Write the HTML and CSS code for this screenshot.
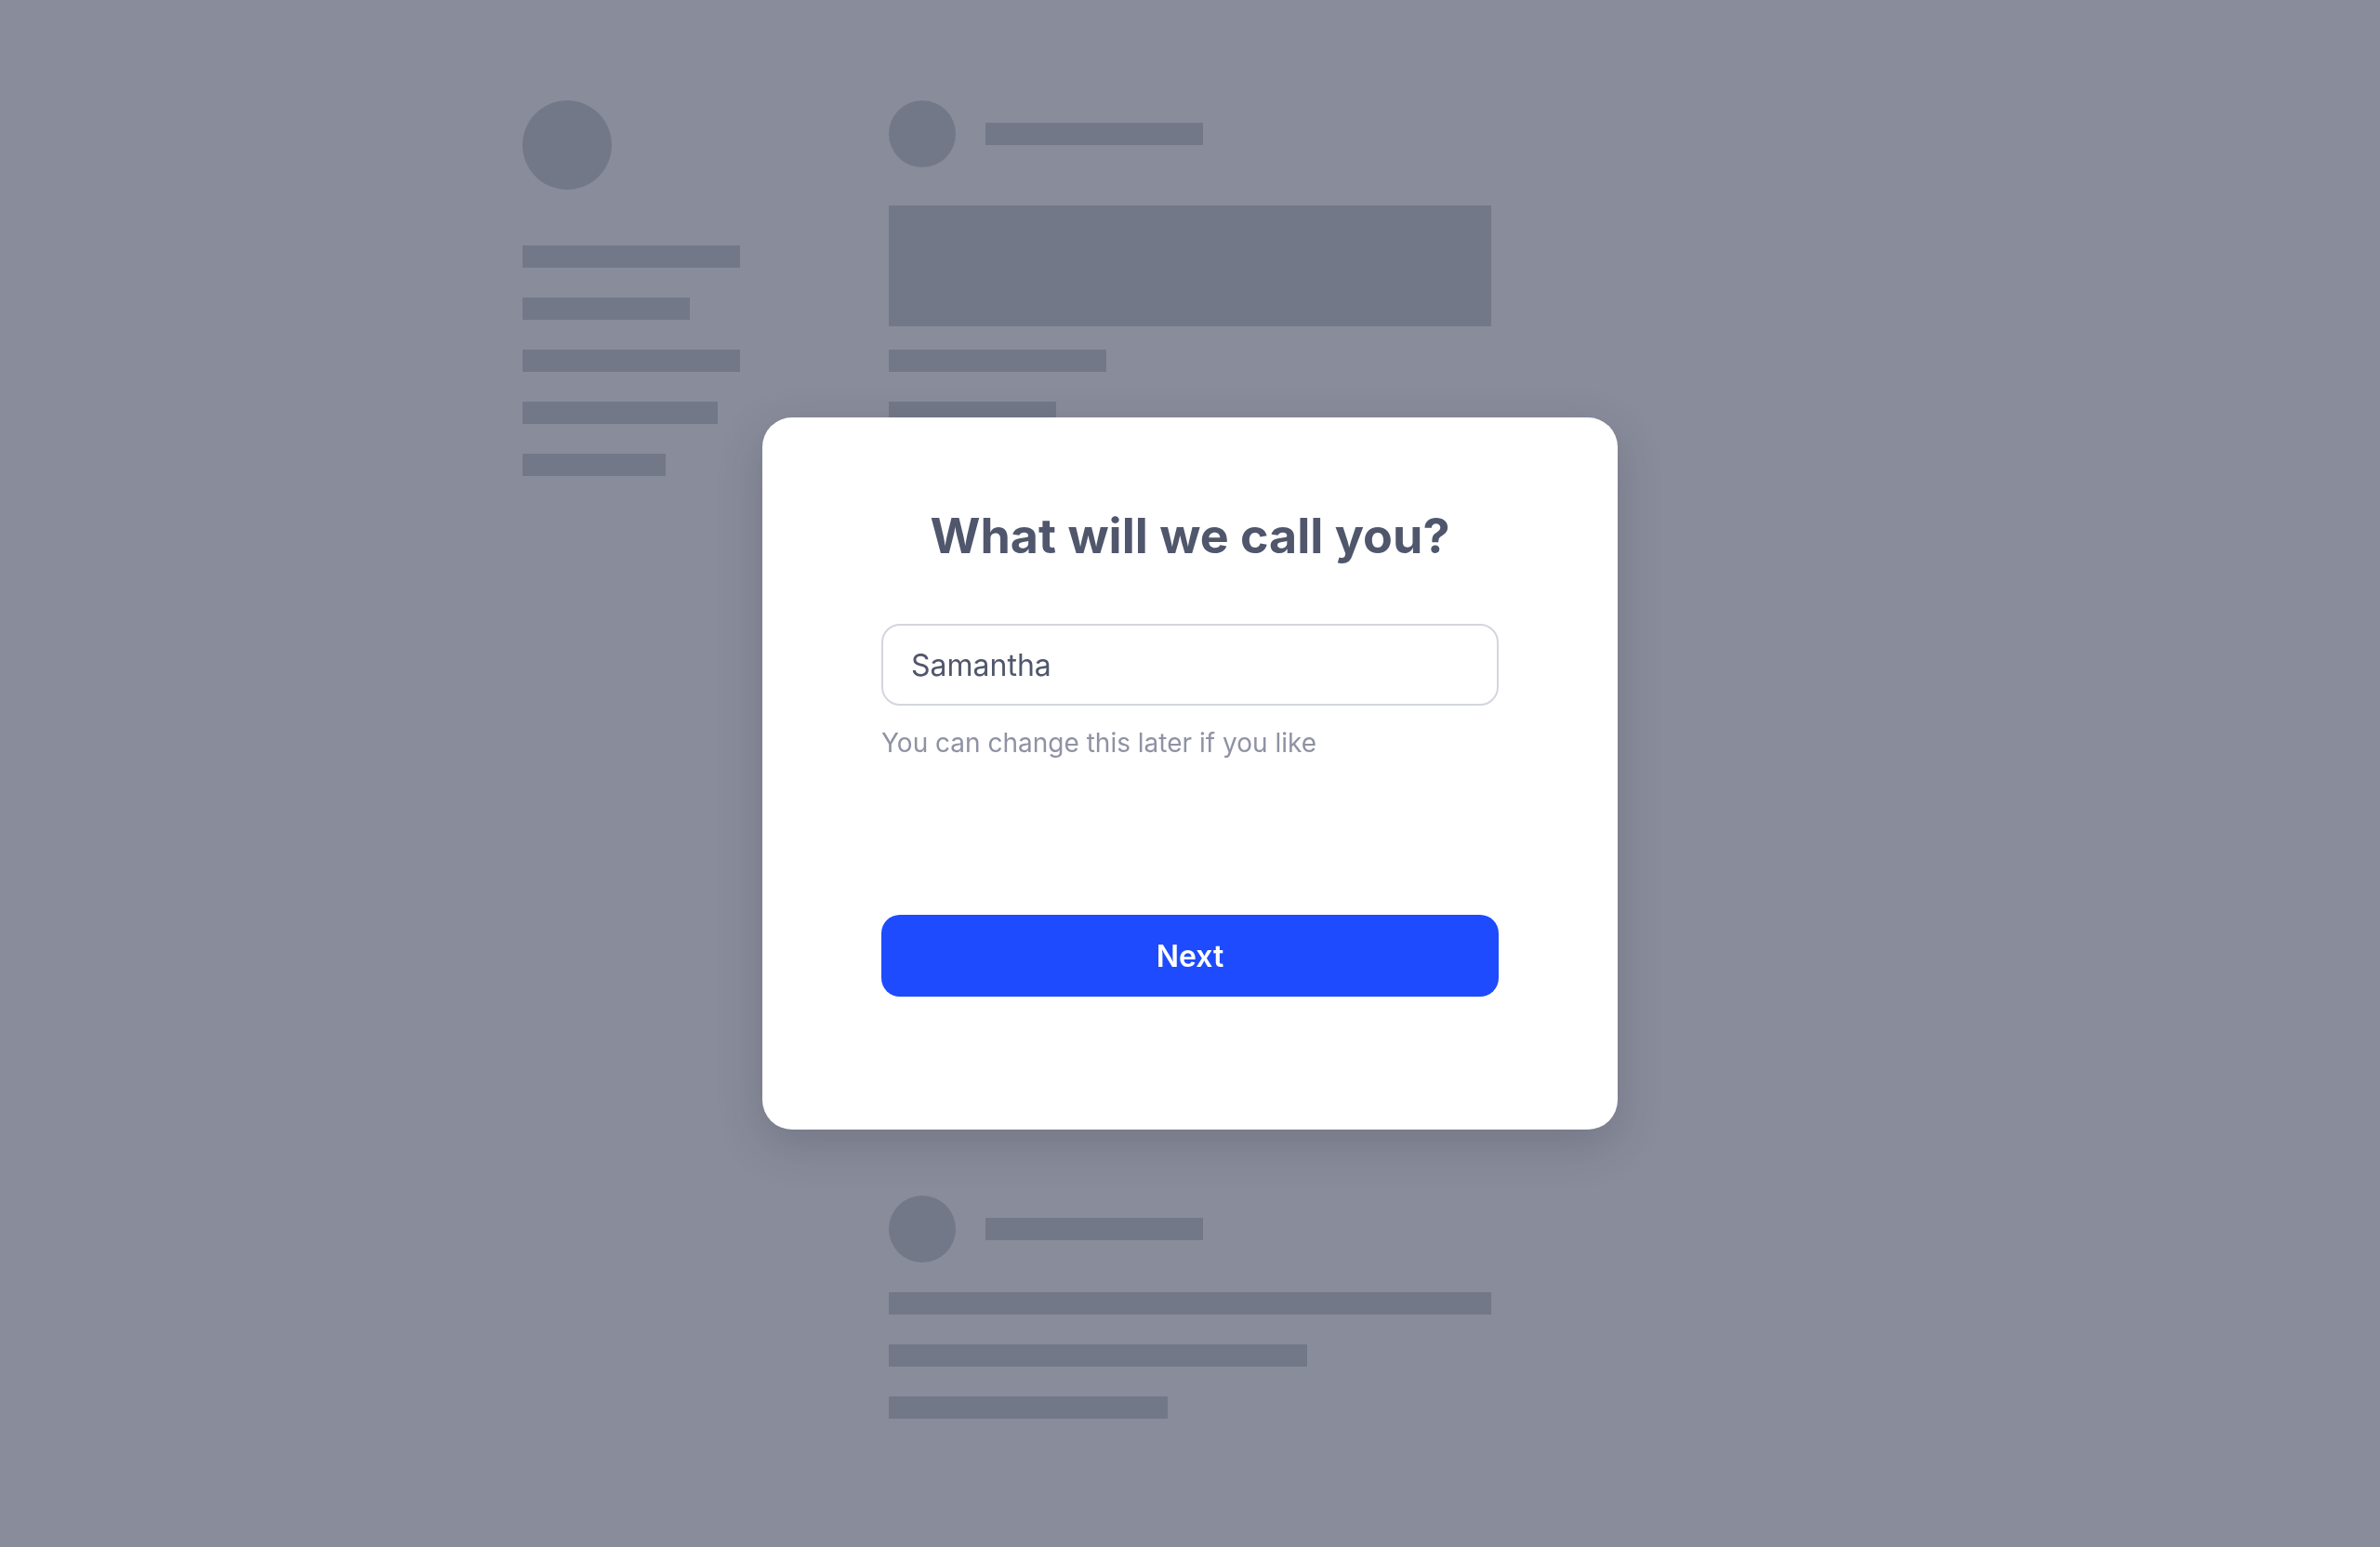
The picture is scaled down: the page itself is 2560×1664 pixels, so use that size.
FILE: index.html
```html
<!DOCTYPE html>
<html lang="en">
<head>
<meta charset="utf-8">
<title>What will we call you?</title>
<link rel="stylesheet" href="styles.css">
</head>
<body>
<div class="layout">
  <aside class="side">
    <div class="avatar avatar-lg"></div>
    <div class="lines">
      <div class="bar w234"></div>
      <div class="bar w180"></div>
      <div class="bar w234"></div>
      <div class="bar w210"></div>
      <div class="bar w154"></div>
    </div>
  </aside>
  <main class="feed">
    <section class="post post-first">
      <div class="post-head">
        <div class="avatar"></div>
        <div class="bar w234"></div>
      </div>
      <div class="media"></div>
      <div class="lines lines-tight">
        <div class="bar w234"></div>
        <div class="bar w180"></div>
      </div>
    </section>
    <section class="post post-second">
      <div class="post-head">
        <div class="avatar"></div>
        <div class="bar w234"></div>
      </div>
      <div class="lines lines-post">
        <div class="bar w648"></div>
        <div class="bar w450"></div>
        <div class="bar w300"></div>
      </div>
    </section>
  </main>
  <div class="right"></div>
</div>

<div class="overlay">
  <div class="modal" role="dialog" aria-labelledby="dlg-title">
    <h1 id="dlg-title" class="title">What will we call you?</h1>
    <div class="field">
      <input class="input" type="text" value="Samantha" aria-label="Name">
      <p class="hint">You can change this later if you like</p>
    </div>
    <button class="btn" type="button">Next</button>
  </div>
</div>
</body>
</html>
```

FILE: styles.css
```css
* { box-sizing: border-box; }

html, body {
  margin: 0;
  padding: 0;
}

body {
  background: #898c9b;
  font-family: Inter, "Noto Sans", "Liberation Sans", sans-serif;
  min-height: 1664px;
}

.layout {
  display: grid;
  grid-template-columns: 234px 648px 234px;
  column-gap: 160px;
  justify-content: center;
  padding-top: 108px;
}

.avatar {
  width: 72px;
  height: 72px;
  border-radius: 50%;
  background: #737889;
  flex: none;
}

.avatar-lg {
  width: 96px;
  height: 96px;
}

.bar {
  height: 24px;
  background: #737889;
}

.w154 { width: 154px; }
.w180 { width: 180px; }
.w210 { width: 210px; }
.w234 { width: 234px; }
.w300 { width: 300px; }
.w450 { width: 450px; }
.w648 { width: 648px; }

.lines {
  display: flex;
  flex-direction: column;
  gap: 32px;
}

.side .lines {
  margin-top: 60px;
}

.feed {
  display: flex;
  flex-direction: column;
}

.post-head {
  display: flex;
  align-items: center;
  gap: 32px;
}

.media {
  margin-top: 41px;
  height: 130px;
  background: #737889;
}

.lines-tight {
  margin-top: 25px;
}

.post-second {
  margin-top: 830px;
}

.lines-post {
  margin-top: 32px;
}

/* Modal */
.overlay {
  position: fixed;
  inset: 0;
  display: flex;
  align-items: center;
  justify-content: center;
}

.modal {
  width: 920px;
  height: 766px;
  background: #ffffff;
  border-radius: 32px;
  box-shadow: 0 16px 48px rgba(40, 44, 60, 0.22);
  padding: 97px 128px 0;
  display: flex;
  flex-direction: column;
}

.title {
  margin: 0;
  text-align: center;
  font-size: 52px;
  font-weight: 700;
  line-height: 62px;
  color: #50576c;
}

.field {
  margin-top: 63px;
}

.input {
  display: block;
  width: 100%;
  height: 88px;
  border: 2px solid #d3d6de;
  border-radius: 20px;
  padding: 0 30px;
  font-family: inherit;
  font-size: 32px;
  color: #50576c;
  background: #ffffff;
  outline: none;
}

.hint {
  margin: 23px 0 0;
  font-size: 28px;
  line-height: 34px;
  color: #8e92a3;
}

.btn {
  margin-top: 168px;
  height: 88px;
  width: 100%;
  border: 0;
  border-radius: 20px;
  background: #1e4bfd;
  color: #ffffff;
  font-family: inherit;
  font-size: 32px;
  font-weight: 600;
  cursor: pointer;
}
```
